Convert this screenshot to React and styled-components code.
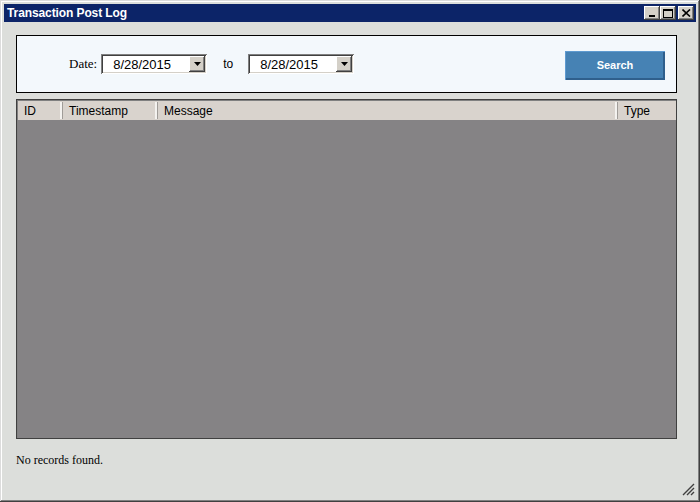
import React from "react";
import styled, { createGlobalStyle } from "styled-components";

const GlobalStyle = createGlobalStyle`
    html, body {
        margin: 0;
        padding: 0;
        background: #dcdedb;
    }
    * {
        box-sizing: border-box;
    }
`

const Window = styled.div`
    display: flex;
    flex-direction: column;
    width: 700px;
    height: 502px;
    padding: 4px;
    background: #dcdedb;
    box-shadow:
        inset -1px -1px #404040,
        inset 1px 1px #dcdcdc,
        inset -2px -2px #808080,
        inset 2px 2px #ffffff;
`
const TitleBar = styled.div`
    display: flex;
    align-items: center;
    height: 18px;
    padding: 0 2px 0 3px;
    background: #0c2468;
`
const Title = styled.div`
    flex: 1;
    color: #ffffff;
    font-family: "Liberation Sans", Arial, sans-serif;
    font-size: 12px;
    font-weight: bold;
    letter-spacing: -0.1px;
`
const CaptionButton = styled.div`
    display: flex;
    align-items: center;
    justify-content: center;
    width: 16px;
    height: 14px;
    margin-left: ${props => props.gap || 0}px;
    background: #d4d0c8;
    box-shadow:
        inset -1px -1px #404040,
        inset 1px 1px #ffffff,
        inset -2px -2px #808080;
`
const Content = styled.div`
    flex: 1;
    display: flex;
    flex-direction: column;
    padding: 13px 19px 0 12px;
`
const FilterPanel = styled.div`
    display: flex;
    align-items: center;
    height: 58px;
    padding: 0 11px 0 52px;
    border: 1px solid #000000;
    background: #f3f8fc;
`
const Label = styled.span`
    font-family: ${props => props.serif ? '"Liberation Serif", "Times New Roman", serif' : '"Liberation Sans", Arial, sans-serif'};
    font-size: ${props => props.serif ? '13px' : '12px'};
    color: #000000;
    margin: ${props => props.margin};
`
const Combo = styled.div`
    display: flex;
    align-items: center;
    width: 106px;
    height: 20px;
    padding: 2px 2px 2px 12px;
    background: #ffffff;
    box-shadow:
        inset 1px 1px #808080,
        inset -1px -1px #ffffff,
        inset 2px 2px #404040,
        inset -2px -2px #d4d0c8;
    font-family: "Liberation Sans", Arial, sans-serif;
    font-size: 13px;
`
const ComboText = styled.span`
    flex: 1;
    padding-top: 1px;
`
const ComboArrow = styled.div`
    display: flex;
    align-items: center;
    justify-content: center;
    width: 16px;
    height: 16px;
    background: #d4d0c8;
    box-shadow:
        inset -1px -1px #404040,
        inset 1px 1px #ffffff,
        inset -2px -2px #808080;
`
const Spacer = styled.div`
    flex: 1;
`
const SearchButton = styled.button`
    width: 100px;
    height: 29px;
    margin-top: 2px;
    border: none;
    background: #4682b4;
    color: #ffffff;
    font-family: "Liberation Sans", Arial, sans-serif;
    font-size: 11px;
    font-weight: bold;
    box-shadow:
        inset 1px 1px #5e9ad0,
        inset -2px -2px #2f5f8c;
`
const Grid = styled.div`
    flex: 1;
    display: flex;
    flex-direction: column;
    margin-top: 6px;
    border: 1px solid #404040;
    box-shadow: inset 1px 1px #808080;
    background: #858385;
`
const HeaderRow = styled.div`
    display: flex;
    height: 19px;
    margin: 1px 0 0 1px;
    background: #d9d3cd;
`
const HeaderCell = styled.div`
    display: flex;
    align-items: center;
    width: ${props => props.width ? props.width + 'px' : 'auto'};
    flex: ${props => props.width ? 'none' : 1};
    padding-left: 6px;
    font-family: "Liberation Sans", Arial, sans-serif;
    font-size: 12px;
    color: #000000;
    border-right: ${props => props.last ? 'none' : '1px solid #a09c98'};
    box-shadow: ${props => props.last ? 'none' : 'inset -2px 0 #f4f2ef'};
    margin: 1px 0;
`
const Footer = styled.div`
    height: 61px;
    padding-top: 14px;
    font-family: "Liberation Serif", "Times New Roman", serif;
    font-size: 12px;
    color: #000000;
`
const Grip = styled.div`
    display: flex;
    justify-content: flex-end;
    margin: -17px -19px 0 0;
    padding: 0 1px 2px 0;
`

const Triangle = () => (
    <svg width="7" height="4" viewBox="0 0 7 4">
        <polygon points="0,0 7,0 3.5,4" fill="#000" />
    </svg>
)

const columns = [
    { label: 'ID', width: 45 },
    { label: 'Timestamp', width: 95 },
    { label: 'Message' },
    { label: 'Type', width: 58, last: true }
]

const App = () => {
    return (
        <React.Fragment>
            <GlobalStyle />
            <Window>
                <TitleBar>
                    <Title>Transaction Post Log</Title>
                    <CaptionButton>
                        <svg width="8" height="10" viewBox="0 0 8 10">
                            <rect x="1" y="7" width="6" height="2" fill="#000" />
                        </svg>
                    </CaptionButton>
                    <CaptionButton>
                        <svg width="10" height="10" viewBox="0 0 10 10">
                            <rect x="0.5" y="1.5" width="9" height="8" fill="none" stroke="#000" />
                            <rect x="0" y="1" width="10" height="2" fill="#000" />
                        </svg>
                    </CaptionButton>
                    <CaptionButton gap={2}>
                        <svg width="9" height="8" viewBox="0 0 9 8">
                            <path d="M0.5 0.5 L8 7.5 M8 0.5 L0.5 7.5" stroke="#000" strokeWidth="1.6" />
                        </svg>
                    </CaptionButton>
                </TitleBar>
                <Content>
                    <FilterPanel>
                        <Label serif margin="0 4px 0 0">Date:</Label>
                        <Combo>
                            <ComboText>8/28/2015</ComboText>
                            <ComboArrow><Triangle /></ComboArrow>
                        </Combo>
                        <Label margin="0 15px 0 16px">to</Label>
                        <Combo>
                            <ComboText>8/28/2015</ComboText>
                            <ComboArrow><Triangle /></ComboArrow>
                        </Combo>
                        <Spacer />
                        <SearchButton>Search</SearchButton>
                    </FilterPanel>
                    <Grid>
                        <HeaderRow>
                            { columns.map((col, index) =>
                                <HeaderCell key={ index } width={ col.width } last={ col.last }>
                                    { col.label }
                                </HeaderCell>
                            )}
                        </HeaderRow>
                    </Grid>
                    <Footer>No records found.</Footer>
                    <Grip>
                        <svg width="13" height="13" viewBox="0 0 13 13">
                            <path d="M12 1 L1 12 M12 5 L5 12 M12 9 L9 12" stroke="#404040" strokeWidth="1.4" />
                        </svg>
                    </Grip>
                </Content>
            </Window>
        </React.Fragment>
    )
}

export default App;
